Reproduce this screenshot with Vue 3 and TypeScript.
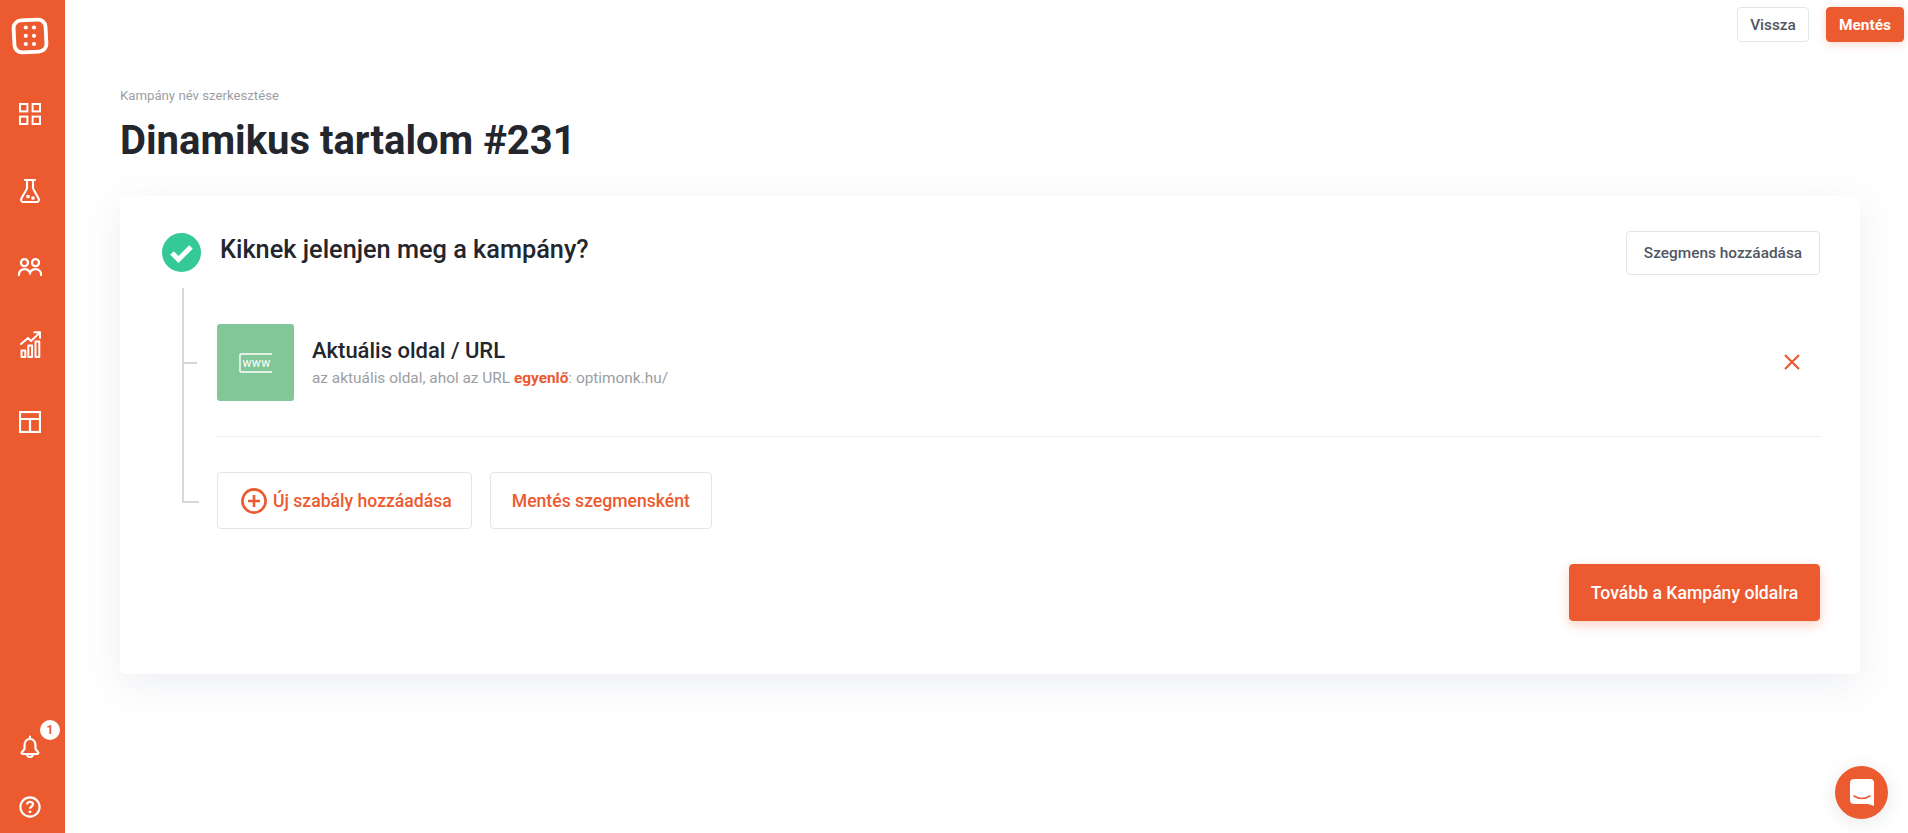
<script setup lang="ts">
const brand: string = '#ec5a2f'
</script>

<template>
  <div class="app">
    <aside class="sidebar">
      <div class="logo">
        <svg width="38" height="38" viewBox="0 0 38 38" fill="none">
          <rect x="3" y="3" width="32" height="32" rx="7.500" stroke="#fff" stroke-width="3.800" transform="rotate(-3 19 19)" />
          <g fill="#fff">
            <circle cx="14.800" cy="10.500" r="2.100" /><circle cx="23" cy="10.500" r="2.100" />
            <circle cx="14.800" cy="18.800" r="2.100" /><circle cx="23" cy="18.800" r="2.100" />
            <circle cx="14.800" cy="27" r="2.100" /><circle cx="23" cy="27" r="2.100" />
          </g>
        </svg>
      </div>
      <nav class="nav">
        <a class="nav-item">
          <svg width="22" height="22" viewBox="0 0 22 22" fill="none" stroke="#fff" stroke-width="2">
            <rect x="1" y="1" width="7.400" height="7.400" /><rect x="13.600" y="1" width="7.400" height="7.400" />
            <rect x="1" y="13.600" width="7.400" height="7.400" /><rect x="13.600" y="13.600" width="7.400" height="7.400" />
          </svg>
        </a>
        <a class="nav-item">
          <svg width="20" height="24" viewBox="2 1 20 24" fill="none" stroke="#fff" stroke-width="2.100" stroke-linejoin="round" stroke-linecap="round">
            <path d="M7 2h10M9 2v8.500L3.400 20.600C2.500 22.400 3.500 24 5.500 24h13c2 0 3-1.600 2.100-3.400L15 10.500V2" />
            <circle cx="10" cy="18.500" r=".8" fill="#fff" /><circle cx="15" cy="20" r=".8" fill="#fff" />
          </svg>
        </a>
        <a class="nav-item">
          <svg width="24" height="18.500" viewBox="0 0 26 20" fill="none" stroke="#fff" stroke-width="2.400" stroke-linecap="round">
            <circle cx="7" cy="5" r="3.800" /><circle cx="19" cy="5" r="3.800" />
            <path d="M1 18.500c0-4 2.500-6.500 6-6.500 3 0 5 1.500 6 4 1-2.500 3-4 6-4 3.500 0 6 2.500 6 6.500" />
          </svg>
        </a>
        <a class="nav-item">
          <svg width="21" height="27" viewBox="0 0 21 27" fill="none" stroke="#fff" stroke-width="2" stroke-linecap="round" stroke-linejoin="round">
            <path d="M1 13l7-6 3 3 9-8.500M14.300 1.300H20V7" />
            <rect x="1.500" y="19.500" width="3.800" height="6.500" /><rect x="8.300" y="14.500" width="3.800" height="11.500" /><rect x="15.500" y="10.500" width="3.800" height="15.500" />
          </svg>
        </a>
        <a class="nav-item">
          <svg width="22" height="22" viewBox="0 0 22 22" fill="none" stroke="#fff" stroke-width="2.200">
            <rect x="1" y="1" width="20" height="20" /><path d="M1 8h20M11 8v13" />
          </svg>
        </a>
      </nav>
      <div class="nav-bottom">
        <a class="nav-item small">
          <svg width="20" height="24" viewBox="1 0 20 24" fill="none" stroke="#fff" stroke-width="2.200" stroke-linecap="round" stroke-linejoin="round">
            <path d="M11 1.500v2.500M5.500 11c0-4 2-7 5.500-7s5.500 3 5.500 7v3l2.500 3c.8 1 .3 2-1 2H4c-1.300 0-1.800-1-1-2l2.500-3zM8 19c0 2 1.300 3 3 3s3-1 3-3" />
          </svg>
          <span class="badge">1</span>
        </a>
        <a class="nav-item small">
          <svg width="22" height="22" viewBox="0 0 24 24" fill="none" stroke="#fff" stroke-width="2.300">
            <circle cx="12" cy="12" r="10.500" />
            <path d="M8.800 9.300c0-1.900 1.400-3 3.200-3s3.200 1.100 3.200 2.800c0 2.400-3.200 2.500-3.200 4.800" stroke-width="2.500" />
            <circle cx="12" cy="17.300" r="1.600" fill="#fff" stroke="none" />
          </svg>
        </a>
      </div>
    </aside>

    <main class="main">
      <header class="topbar">
        <button class="btn btn-back">Vissza</button>
        <button class="btn btn-save">Mentés</button>
      </header>

      <section class="page">
        <p class="crumb">Kampány név szerkesztése</p>
        <h1 class="title">Dinamikus tartalom #231</h1>

        <div class="card">
          <div class="card-head">
            <div class="head-left">
              <svg class="check" width="39" height="39" viewBox="0 0 39 39">
                <circle cx="19.500" cy="19.500" r="19.500" fill="#36c998" />
                <path d="M10 20l6.500 6.500L29 14" fill="none" stroke="#fff" stroke-width="5" />
              </svg>
              <h2 class="heading">Kiknek jelenjen meg a kampány?</h2>
            </div>
            <button class="btn btn-segment">Szegmens hozzáadása</button>
          </div>

          <div class="tree">
            <div class="rule">
              <div class="rule-icon">
                <svg width="34" height="20" viewBox="0 0 34 20">
                  <path d="M33 1H2a1 1 0 0 0-1 1v16a1 1 0 0 0 1 1h31" fill="none" stroke="#fff" stroke-width="1.400" />
                  <text x="3.500" y="14" class="www">www</text>
                </svg>
              </div>
              <div class="rule-text">
                <div class="rule-title">Aktuális oldal / URL</div>
                <div class="rule-sub">az aktuális oldal, ahol az URL <b>egyenlő</b>: optimonk.hu/</div>
              </div>
              <svg class="remove" width="16" height="16" viewBox="0 0 16 16">
                <path d="M1 1l14 14M15 1L1 15" fill="none" :stroke="brand" stroke-width="2.200" />
              </svg>
            </div>

            <div class="actions">
              <button class="btn btn-outline btn-add">
                <svg width="26" height="26" viewBox="0 0 26 26" fill="none" :stroke="brand" stroke-width="2.600">
                  <circle cx="13" cy="13" r="11.600" /><path d="M13 7v12M7 13h12" />
                </svg>
                Új szabály hozzáadása
              </button>
              <button class="btn btn-outline">Mentés szegmensként</button>
            </div>
          </div>

          <div class="card-foot">
            <button class="btn btn-next">Tovább a Kampány oldalra</button>
          </div>
        </div>
      </section>
    </main>

    <div class="chat">
      <svg width="24" height="27" viewBox="0 0 24 27">
        <path d="M4 0h16a4 4 0 0 1 4 4v23l-6-2H4a4 4 0 0 1-4-4V4a4 4 0 0 1 4-4z" fill="#fff" />
        <path d="M4 17c5 3 11 3 16 0" fill="none" :stroke="brand" stroke-width="1.500" stroke-linecap="round" />
      </svg>
    </div>
  </div>
</template>

<style>
html, body { margin: 0; background: #fff; }
</style>

<style scoped>
.app {
  display: flex;
  height: 833px;
  overflow: hidden;
  font-family: Roboto, "Liberation Sans", sans-serif;
  color: #23262d;
  background: #fff;
}
.sidebar {
  width: 65px;
  flex: none;
  box-sizing: border-box;
  padding-right: 5px;
  background: #ec5a2f;
  display: flex;
  flex-direction: column;
}
.logo { height: 75px; display: flex; align-items: flex-start; justify-content: center; padding-top: 17px; box-sizing: border-box; }
.nav { display: flex; flex-direction: column; flex: 1; }
.nav-item {
  position: relative;
  height: 77px;
  display: flex;
  align-items: center;
  justify-content: center;
}
.nav-item.small { height: 52px; }
.nav-bottom { display: flex; flex-direction: column; gap: 8px; }
.badge {
  position: absolute;
  top: -1px;
  left: 40px;
  width: 20px;
  height: 20px;
  border-radius: 50%;
  background: #fff;
  color: #ec5a2f;
  font-size: 12px;
  font-weight: 700;
  display: flex;
  align-items: center;
  justify-content: center;
}
.main { flex: 1; min-width: 0; }
.topbar {
  display: flex;
  justify-content: flex-end;
  gap: 17px;
  padding: 7px 4px 0 0;
}
.btn {
  font-family: inherit;
  box-sizing: border-box;
  border-radius: 4px;
  border: 1px solid #e3e5e8;
  background: #fff;
  cursor: pointer;
  display: inline-flex;
  align-items: center;
  justify-content: center;
}
.btn-back {
  width: 72px;
  height: 35px;
  font-size: 15.400px;
  font-weight: 500;
  color: #505763;
}
.btn-save {
  width: 78px;
  height: 35px;
  font-size: 15.400px;
  font-weight: 700;
  color: #fff;
  background: #ec5a2f;
  border-color: #ec5a2f;
  box-shadow: 0 2px 8px rgba(238, 90, 47, .25);
}
.page { padding: 46px 48px 0 55px; }
.crumb { margin: 0; font-size: 13.200px; line-height: 16px; color: #9b9ea3; }
.title {
  margin: 13px 0 0;
  font-size: 40px;
  line-height: 48px;
  font-weight: 700;
  color: #23262d;
}
.card {
  margin-top: 31px;
  height: 478px;
  box-sizing: border-box;
  padding: 35px 40px 0 42px;
  background: #fff;
  border-radius: 6px;
  box-shadow: 0 10px 40px rgba(70, 85, 130, .1);
  display: flex;
  flex-direction: column;
}
.card-head { display: flex; justify-content: space-between; align-items: flex-start; }
.head-left { display: flex; align-items: center; gap: 19px; margin-top: 2px; }
.check { display: block; flex: none; }
.heading { margin: 0 0 6px; font-size: 25.300px; line-height: 32px; font-weight: 500; color: #23262d; }
.btn-segment {
  width: 194px;
  height: 44px;
  font-size: 15.400px;
  font-weight: 500;
  color: #505763;
}
.tree {
  position: relative;
  margin: 13px 0 0 20px;
  padding: 36px 0 0 35px;
}
.tree::before {
  content: "";
  position: absolute;
  left: 0;
  top: 0;
  bottom: 26px;
  width: 15px;
  border-left: 2px solid #d5d8dd;
  border-bottom: 2px solid #d5d8dd;
}
.tree::after {
  content: "";
  position: absolute;
  left: 0;
  top: 74px;
  width: 15px;
  border-top: 2px solid #d5d8dd;
}
.rule {
  display: flex;
  align-items: center;
  padding-bottom: 35px;
  border-bottom: 1px solid #edeef0;
}
.rule-icon {
  width: 77px;
  height: 77px;
  flex: none;
  border-radius: 3px;
  background: #81c797;
  display: flex;
  align-items: center;
  justify-content: center;
}
.www { font-family: Roboto, sans-serif; font-size: 12px; letter-spacing: .3px; fill: #fff; }
.rule-text { flex: 1; margin-left: 18px; }
.rule-title { font-size: 22px; line-height: 28px; font-weight: 500; color: #23262d; }
.rule-sub { margin-top: 3px; font-size: 15.400px; line-height: 20px; color: #9b9ea3; }
.rule-sub b { font-weight: 700; color: #ec5a2f; }
.remove { flex: none; margin: 0 20px 2px 0; }
.actions { display: flex; gap: 18px; margin-top: 35px; }
.btn-outline {
  height: 57px;
  padding: 0 21px;
  font-size: 17.600px;
  font-weight: 500;
  color: #ec5a2f;
}
.btn-add { padding: 0 19px 0 23px; gap: 6px; }
.card-foot { display: flex; justify-content: flex-end; margin-top: 35px; }
.btn-next {
  width: 251px;
  height: 57px;
  font-size: 17.600px;
  font-weight: 500;
  color: #fff;
  background: #ec5a2f;
  border-color: #ec5a2f;
  box-shadow: 0 4px 12px rgba(238, 90, 47, .28);
}
.chat {
  position: absolute;
  left: 1835px;
  top: 766px;
  width: 53px;
  height: 53px;
  border-radius: 50%;
  background: #ec5a2f;
  display: flex;
  align-items: center;
  justify-content: center;
  box-shadow: 0 3px 20px rgba(0, 0, 0, .1);
}
</style>
